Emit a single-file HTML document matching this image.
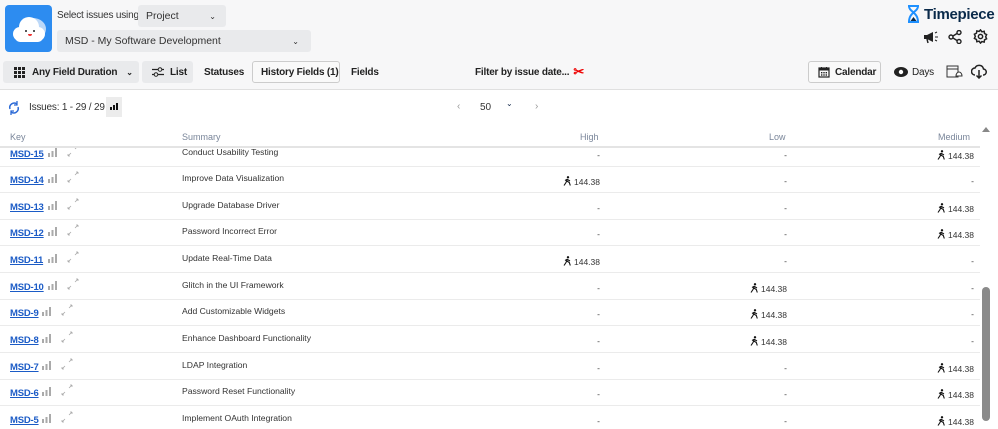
<!DOCTYPE html><html><head><style>
body{margin:0;width:998px;height:427px;overflow:hidden;font-family:"Liberation Sans",sans-serif;background:#fff;position:relative;color:#172b4d}
.a{position:absolute;white-space:nowrap}
.hdr{left:0;top:0;width:998px;height:89px;background:#f7f7f8;border-bottom:1px solid #e0e0e0}
.sel{background:#e9eaec;border-radius:3px;font-size:10.5px;color:#333;display:flex;align-items:center;padding-left:8px;box-sizing:border-box}
.btn{font-size:10px;font-weight:bold;color:#222;display:flex;align-items:center;box-sizing:border-box;border-radius:3px;letter-spacing:-0.2px}
.g{background:#e9eaec}
.o{border:1px solid #ccc;background:#f9f9f9}
.row{left:0;width:980px;height:26px;border-bottom:1px solid #ebebeb;font-size:8.6px}
.key{position:absolute;left:10px;top:9px;font-size:9.5px;font-weight:bold;color:#1b5bc6;text-decoration:underline;letter-spacing:-0.2px}
.bars{position:absolute;top:8px;width:10px;height:9px}
.sum{position:absolute;left:182px;top:7px;color:#333}
.v{position:absolute;top:10px;color:#333;text-align:right;font-size:8.5px}
.th{font-size:9px;color:#7a869a;top:132px}
</style></head><body>
<div class="a hdr"></div>
<div class="a" style="left:5px;top:5px;width:47px;height:47px;background:#2d8cf0;border-radius:4px">
<svg width="47" height="47"><ellipse cx="28" cy="24" rx="13" ry="11" fill="#bcd8f8"/><circle cx="15" cy="29" r="7" fill="#fff"/><circle cx="24" cy="22" r="10" fill="#fff"/><circle cx="33" cy="29" r="7" fill="#fff"/><rect x="10" y="27" width="28" height="10" rx="5" fill="#fff"/><circle cx="21" cy="26" r="1" fill="#222"/><circle cx="29" cy="26" r="1" fill="#222"/><path d="M23 29h4a2 2 0 0 1-4 0z" fill="#e33"/></svg></div>
<div class="a" style="left:57px;top:10px;font-size:10px;color:#333;letter-spacing:-0.2px">Select issues using</div>
<div class="a sel" style="left:138px;top:5px;width:88px;height:22px">Project<span style="position:absolute;right:10px;font-size:8px">&#8964;</span></div>
<div class="a sel" style="left:57px;top:30px;width:254px;height:22px">MSD - My Software Development<span style="position:absolute;right:12px;font-size:8px">&#8964;</span></div>
<div class="a" style="left:906px;top:5px;font-size:15px;font-weight:bold;color:#0a2a4a;display:flex;align-items:center;letter-spacing:-0.3px"><svg width="15" height="18" style="margin-right:3px"><path d="M2 1h11M2 17h11M3 1c0 6 9 6 9 16M12 1c0 6-9 6-9 16" stroke="#1e90ff" stroke-width="2" fill="none"/><path d="M4.5 16l3-4 3 4z" fill="#0a2a4a"/></svg>Timepiece</div>
<svg class="a" style="left:923px;top:30px" width="16" height="14"><path d="M2 6l8-4v10l-8-4z" fill="#222"/><rect x="1" y="5" width="3" height="4" fill="#222"/><path d="M4 9l1 4" stroke="#222" stroke-width="1.5"/><path d="M12 3l2-1M12 7h3M12 10l2 1" stroke="#222"/></svg>
<svg class="a" style="left:948px;top:30px" width="14" height="14"><circle cx="11" cy="2.5" r="2" fill="none" stroke="#222" stroke-width="1.4"/><circle cx="3" cy="7" r="2" fill="none" stroke="#222" stroke-width="1.4"/><circle cx="11" cy="11.5" r="2" fill="none" stroke="#222" stroke-width="1.4"/><path d="M5 6l4-2.5M5 8l4 2.5" stroke="#222" stroke-width="1.4"/></svg>
<svg class="a" style="left:973px;top:29px" width="15" height="15" viewBox="0 0 16 16"><path d="M8 1l1.5 2 2.4-.6.4 2.4 2.2 1.2-1 2.2 1 2.2-2.2 1.2-.4 2.4-2.4-.6L8 15l-1.5-2-2.4.6-.4-2.4-2.2-1.2 1-2.2-1-2.2 2.2-1.2.4-2.4 2.4.6z" fill="none" stroke="#222" stroke-width="1.6"/><circle cx="8" cy="8" r="2.3" fill="none" stroke="#222" stroke-width="1.6"/></svg>
<div class="a btn g" style="left:3px;top:61px;width:136px;height:22px;padding-left:11px"><svg width="11" height="11" style="margin-right:7px"><g fill="#222"><rect x="0" y="0" width="3" height="3"/><rect x="4" y="0" width="3" height="3"/><rect x="8" y="0" width="3" height="3"/><rect x="0" y="4" width="3" height="3"/><rect x="4" y="4" width="3" height="3"/><rect x="8" y="4" width="3" height="3"/><rect x="0" y="8" width="3" height="3"/><rect x="4" y="8" width="3" height="3"/><rect x="8" y="8" width="3" height="3"/></g></svg>Any Field Duration<span style="margin-left:9px;font-size:8px">&#8964;</span></div>
<div class="a btn g" style="left:142px;top:61px;width:51px;height:22px;padding-left:10px"><svg width="12" height="10" style="margin-right:6px"><path d="M0 2.5h12M0 7.5h12" stroke="#222" stroke-width="1.2"/><circle cx="8" cy="2.5" r="1.8" fill="#eee" stroke="#222"/><circle cx="4" cy="7.5" r="1.8" fill="#eee" stroke="#222"/></svg>List</div>
<div class="a btn" style="left:204px;top:61px;height:22px">Statuses</div>
<div class="a btn o" style="left:252px;top:61px;width:88px;height:22px;padding-left:8px">History Fields (1)</div>
<div class="a btn" style="left:351px;top:61px;height:22px">Fields</div>
<div class="a btn" style="left:475px;top:61px;height:22px">Filter by issue date... <span style="color:#e00;font-size:13px;margin-left:4px">&#9986;</span></div>
<div class="a btn o" style="left:808px;top:61px;width:73px;height:22px;padding-left:9px"><svg width="12" height="12" style="margin-right:5px"><rect x="1" y="2" width="10" height="9" fill="none" stroke="#222" stroke-width="1.2"/><rect x="1" y="2" width="10" height="2.5" fill="#222"/><path d="M3.5 1v2M8.5 1v2" stroke="#222"/><g fill="#222"><rect x="3" y="6" width="1.4" height="1.4"/><rect x="5.3" y="6" width="1.4" height="1.4"/><rect x="7.6" y="6" width="1.4" height="1.4"/><rect x="3" y="8.3" width="1.4" height="1.4"/><rect x="5.3" y="8.3" width="1.4" height="1.4"/><rect x="7.6" y="8.3" width="1.4" height="1.4"/></g></svg>Calendar</div>
<div class="a btn" style="left:894px;top:61px;height:22px"><svg width="14" height="10" style="margin-right:4px"><ellipse cx="7" cy="5" rx="7" ry="5" fill="#222"/><circle cx="7" cy="5" r="2.2" fill="#fff"/></svg><span style="font-weight:normal;color:#222">Days</span></div>
<svg class="a" style="left:946px;top:64px" width="17" height="15"><rect x="1" y="2" width="11" height="11" fill="none" stroke="#333"/><path d="M1 5h11" stroke="#333"/><path d="M10 12a3 4 0 0 1 6 0z" fill="#fff" stroke="#333"/></svg>
<svg class="a" style="left:971px;top:64px" width="16" height="15"><path d="M4 11a3.5 3.5 0 0 1 0-7a4.5 4.5 0 0 1 8.5 1a3 3 0 0 1-.5 6" fill="none" stroke="#222" stroke-width="1.5"/><path d="M8 6v8M5.5 11.5l2.5 2.5 2.5-2.5" fill="none" stroke="#222" stroke-width="1.5"/></svg>
<svg class="a" style="left:8px;top:101px" width="12" height="14"><path d="M2 8a4.5 4.5 0 0 1 7-5M10 6a4.5 4.5 0 0 1-7 5" fill="none" stroke="#2d6bd6" stroke-width="1.5"/><path d="M9 0v4h-3M3 14v-4h3" fill="none" stroke="#2d6bd6" stroke-width="1.3"/></svg>
<div class="a" style="left:29px;top:102px;font-size:10px;color:#333;letter-spacing:-0.2px">Issues: 1 - 29 / 29</div>
<div class="a" style="left:106px;top:97px;width:16px;height:20px;background:#ececec"><svg width="16" height="20"><g fill="#111"><rect x="4" y="10" width="2" height="3"/><rect x="7" y="8" width="2" height="5"/><rect x="10" y="6" width="2" height="7"/></g></svg></div>
<div class="a" style="left:457px;top:101px;font-size:10px;color:#999">&lsaquo;</div>
<div class="a" style="left:480px;top:102px;font-size:10px;color:#333">50</div>
<div class="a" style="left:506px;top:99px;font-size:8px">&#8964;</div>
<div class="a" style="left:535px;top:101px;font-size:10px;color:#999">&rsaquo;</div>
<div class="a th" style="left:10px">Key</div>
<div class="a th" style="left:182px">Summary</div>
<div class="a th" style="left:580px">High</div>
<div class="a th" style="left:769px">Low</div>
<div class="a th" style="left:938px">Medium</div>
<div class="a" style="left:0;top:146px;width:980px;height:281px;overflow:hidden;border-top:2px solid #e4e4e4"><div id="rows" style="position:relative;top:-8.5px"></div></div>
<div class="a" style="left:982px;top:127px;width:0;height:0;border-left:4px solid transparent;border-right:4px solid transparent;border-bottom:5px solid #888"></div>
<div class="a" style="left:982px;top:287px;width:8px;height:134px;background:#8a8a8a;border-radius:4px"></div>
<script>
var d=[["MSD-15","Conduct Usability Testing",0,0,1],["MSD-14","Improve Data Visualization",1,0,0],["MSD-13","Upgrade Database Driver",0,0,1],["MSD-12","Password Incorrect Error",0,0,1],["MSD-11","Update Real-Time Data",1,0,0],["MSD-10","Glitch in the UI Framework",0,1,0],["MSD-9","Add Customizable Widgets",0,1,0],["MSD-8","Enhance Dashboard Functionality",0,1,0],["MSD-7","LDAP Integration",0,0,1],["MSD-6","Password Reset Functionality",0,0,1],["MSD-5","Implement OAuth Integration",0,0,1]];
var h="";var ends=[600,787,974];
var run='<svg width="9" height="10" viewBox="0 0 9 10" style="vertical-align:-1px;margin-right:2px"><circle cx="5" cy="1.3" r="1.2" fill="#111"/><path d="M4.5 3L3 6.5 1 9.5M3.8 5l2.5 1.5 1 3M4.5 3.5L7 5M4.3 3.3L2 4.5" stroke="#111" stroke-width="1.1" fill="none"/></svg>';
d.forEach(function(r,i){var t=26.65*i;var kw=r[0].length*5.6+14;
h+='<div class="a row" style="top:'+t+'px"><span class="key">'+r[0]+'</span>';
h+='<svg class="bars" style="left:'+kw+'px" viewBox="0 0 10 9"><g fill="#aaa"><rect x="0" y="5" width="2" height="4"/><rect x="3.5" y="3" width="2" height="6"/><rect x="7" y="0" width="2" height="9"/></g></svg>';
h+='<svg class="bars" style="left:'+(kw+19)+'px;top:5px;width:12px;height:12px" viewBox="0 0 12 12"><path d="M1 11l3-3M1 11h2M1 11v-2M11 1l-3 3M11 1h-2M11 1v2" stroke="#aaa" stroke-width=".8" fill="none"/></svg>';
h+='<span class="sum">'+r[1]+'</span>';
for(var j=0;j<3;j++){h+='<span class="v" style="right:'+(980-ends[j])+'px">'+(r[2+j]?run+'144.38':'-')+'</span>';}
h+='</div>';});
document.getElementById("rows").innerHTML=h;
</script>
</body></html>
